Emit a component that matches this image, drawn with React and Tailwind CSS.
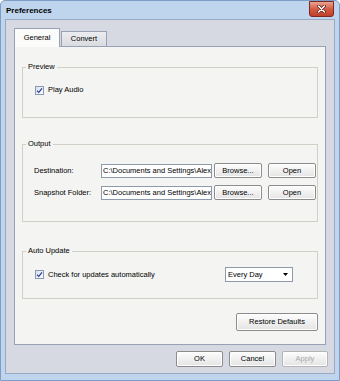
import React from "react";

const Btn = ({ children, className = "", disabled = false }) => (
  <div
    className={`flex items-center justify-center rounded-[2px] border bg-linear-to-b from-[#fdfdfd] to-[#e4e4e4] shadow-[inset_0_0_0_1px_#ffffff] ${
      disabled ? "border-[#b4b4b4] text-[#a8a8a8]" : "border-[#8c8c8c] text-black"
    } ${className}`}
  >
    {children}
  </div>
);

const Check = () => (
  <div className="flex h-[9px] w-[9px] shrink-0 items-center justify-center border border-[#8a9ab4] bg-linear-to-br from-[#dbe0e8] to-[#ffffff]">
    <svg width="7" height="7" viewBox="0 0 7 7">
      <path d="M1 3.6 L2.8 5.4 L6 1.4" stroke="#2b3fa6" strokeWidth="1.3" fill="none" />
    </svg>
  </div>
);

const Group = ({ title, className = "", children }) => (
  <fieldset className={`border border-[#d0d0c6] ${className}`}>
    <legend className="ml-[3px] px-[2px] leading-[10px]">{title}</legend>
    {children}
  </fieldset>
);

const PathRow = ({ label }) => (
  <div className="flex h-[15px] items-center">
    <div className="w-[67px]">{label}</div>
    <div className="flex h-[14px] w-[111px] items-center overflow-hidden whitespace-nowrap border border-[#8c9aac] bg-white pl-[1px]">
      C:\Documents and Settings\Alexander\My Documents
    </div>
    <Btn className="ml-[2px] h-[15px] w-[48px]">Browse...</Btn>
    <Btn className="ml-[6px] h-[15px] w-[48px]">Open</Btn>
  </div>
);

export default function App() {
  return (
    <div className="flex h-[381px] w-[340px] flex-col overflow-hidden rounded-t-[5px] border border-[#7e9cc4] bg-[#bfd4ed] font-['Liberation_Sans',Arial,sans-serif] text-[7.5px] leading-none text-black">
      {/* title bar */}
      <div className="flex h-[18px] items-start justify-between pl-[5px] pr-[5px]">
        <span className="mt-[6px] text-[8px] font-bold leading-[8px]">Preferences</span>
        <div className="flex h-[16px] w-[25px] items-center justify-center rounded-b-[3px] border border-[#7a2a20] bg-linear-to-b from-[#eaa394] via-[#d45a43] to-[#c0402a]">
          <svg width="9" height="8" viewBox="0 0 9 8">
            <path d="M1.5 1 L7.5 7 M7.5 1 L1.5 7" stroke="#5a1a12" strokeWidth="3" strokeLinecap="round" />
            <path d="M1.5 1 L7.5 7 M7.5 1 L1.5 7" stroke="#ffffff" strokeWidth="1.6" strokeLinecap="round" />
          </svg>
        </div>
      </div>

      {/* client area */}
      <div className="mx-[4px] mb-[6px] flex flex-1 flex-col border border-[#9aaac2] bg-[#d6d9e2] px-[8px] pt-[8px] pb-[6px]">
        {/* tabs */}
        <div className="flex h-[18px] items-end">
          <div className="relative z-10 -mb-[1px] flex h-[19px] w-[46px] items-center justify-center border border-b-0 border-[#98a2b4] bg-[#fbfbfa]">
            General
          </div>
          <div className="ml-[1px] flex h-[15px] w-[46px] items-center justify-center border border-b-0 border-[#98a2b4] bg-linear-to-b from-[#ecedf0] to-[#d9dbe0]">
            Convert
          </div>
        </div>

        {/* panel */}
        <div className="flex flex-1 flex-col border border-[#98a2b4] bg-[#f4f4f2] px-[7px]">
          <Group title="Preview" className="mt-[15px] h-[56px]">
            <div className="flex h-[10px] items-center gap-[4px] pl-[12px] mt-[13px]">
              <Check />
              <span>Play Audio</span>
            </div>
          </Group>

          <Group title="Output" className="mt-[21px] h-[83px]">
            <div className="flex flex-col gap-[7px] pl-[11px] pt-[14px]">
              <PathRow label="Destination:" />
              <PathRow label="Snapshot Folder:" />
            </div>
          </Group>

          <Group title="Auto Update" className="mt-[24px] h-[53px]">
            <div className="flex h-[15px] items-center pl-[12px] pr-[24px] mt-[11px]">
              <Check />
              <span className="ml-[4px]">Check for updates automatically</span>
              <div className="ml-auto flex h-[15px] w-[68px] items-center justify-between border border-[#8c9aac] bg-white pl-[2px] pr-[4px]">
                <span>Every Day</span>
                <svg width="5" height="3" viewBox="0 0 5 3">
                  <path d="M0 0 L5 0 L2.5 3 Z" fill="#000" />
                </svg>
              </div>
            </div>
          </Group>

          <Btn className="mt-[14px] h-[18px] w-[82px] self-end">Restore Defaults</Btn>
        </div>

        {/* dialog buttons */}
        <div className="-mr-[2px] mt-[6px] flex justify-end gap-[6px]">
          <Btn className="h-[16px] w-[47px]">OK</Btn>
          <Btn className="h-[16px] w-[47px]">Cancel</Btn>
          <Btn className="h-[16px] w-[46px]" disabled>
            Apply
          </Btn>
        </div>
      </div>
    </div>
  );
}
